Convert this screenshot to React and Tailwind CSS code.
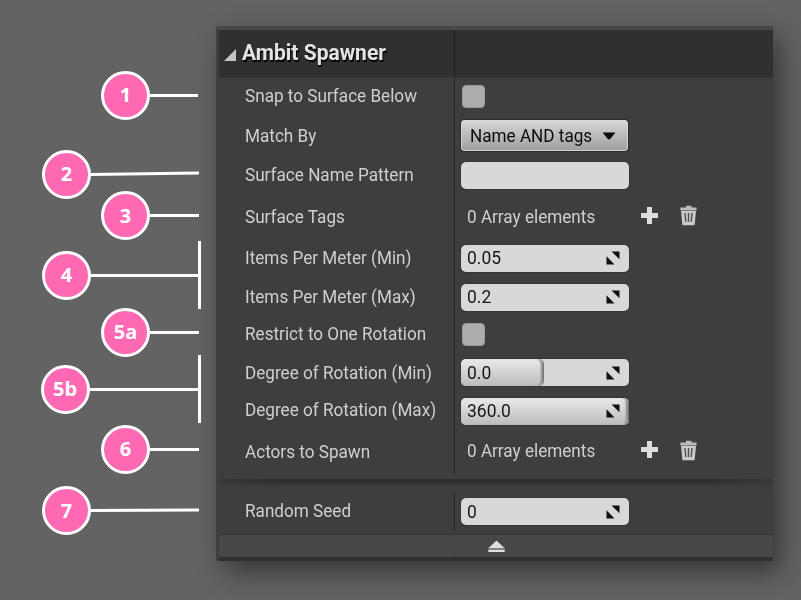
import React from 'react';

const callouts = [
  { label: '1', pos: 'left-[101px] top-[70.5px]', line: 'w-[49px]' },
  { label: '2', pos: 'left-[42px] top-[149.5px]', line: 'w-[109px] origin-left -rotate-[0.8deg]' },
  { label: '3', pos: 'left-[101px] top-[191px]', line: 'w-[50px]' },
  { label: '4', pos: 'left-[42px] top-[250.5px]', line: 'w-[108px]', bracket: true },
  { label: '5a', pos: 'left-[101px] top-[307.5px]', line: 'w-[50px]' },
  { label: '5b', pos: 'left-[40.5px] top-[364.5px]', line: 'w-[109.5px]', bracket: true },
  { label: '6', pos: 'left-[101px] top-[424.5px]', line: 'w-[50px]' },
  { label: '7', pos: 'left-[42px] top-[486px]', line: 'w-[109px] origin-left -rotate-[0.2deg]' },
];

function Callout({ label, pos, line, bracket }) {
  return (
    <div className={`absolute flex items-center ${pos}`}>
      <div className="flex size-[49px] shrink-0 items-center justify-center rounded-full border-[3px] border-white bg-[#ff69b4] font-['Open_Sans',sans-serif] text-[20px] font-bold leading-none text-white">
        {label}
      </div>
      <div className={`-ml-px h-[3px] bg-white ${line}`} />
      {bracket && <div className="-my-3 h-[68px] w-[3px] bg-white" />}
    </div>
  );
}

function Row({ label, height, labelPad = '', children }) {
  return (
    <div className={`flex ${height}`}>
      <div className={`flex w-[236px] shrink-0 items-center border-r border-[#272727] pl-[26px] ${labelPad}`}>
        <Label>{label}</Label>
      </div>
      <div className="flex flex-1 items-center pl-[5.5px]">{children}</div>
    </div>
  );
}

function Label({ children }) {
  return (
    <span className="inline-block origin-left scale-x-[0.952] whitespace-nowrap text-[18px] leading-none text-[#cfcfcf]">
      {children}
    </span>
  );
}

function Checkbox() {
  return <div className="ml-[1.5px] size-[23px] rounded-[4px] border border-[#9a9a9a] bg-[#adadad]" />;
}

function Spinner() {
  return (
    <svg className="relative mr-[9.5px] size-[14px]" viewBox="0 0 14 14">
      <path d="M5.5 0.5H13.5V8.3ZM0.5 5.3V13.5H8.5Z" fill="#111" />
    </svg>
  );
}

function Field({ value, fill, spinner = true }) {
  return (
    <div className="relative flex h-[27px] w-[168.5px] items-center justify-between overflow-hidden rounded-[5px] bg-[#d8d8d8] pl-[6px] shadow-[0_0_0_1px_#363636]">
      {fill && (
        <div
          className={`absolute inset-y-0 left-0 rounded-r-[5px] bg-linear-to-b from-[#e9e9e9] to-[#bcbcbc] shadow-[inset_-3px_0_2px_-1px_#8a8a8a,1px_0_0_#777] ${fill}`}
        />
      )}
      <span className="relative origin-left scale-x-[0.97] text-[18px] leading-none text-[#161616]">{value}</span>
      {spinner && <Spinner />}
    </div>
  );
}

function ArrayTools({ textPad }) {
  return (
    <div className="flex items-center pl-[6.5px]">
      <div className={`w-[173px] ${textPad}`}>
        <Label>0 Array elements</Label>
      </div>
      <svg className="mb-[3px] size-[19px]" viewBox="0 0 19 19">
        <path d="M7 1h5v6h6v5h-6v6H7v-6H1V7h6z" fill="#dcdcdc" />
      </svg>
      <svg className="mb-[2px] ml-[20px] h-[21px] w-[19px]" viewBox="0 0 19 21">
        <path d="M7 0.8h5.5v1.7H17.6v3H1.4v-3H7z" fill="#bcbcbc" />
        <path d="M2 6h15l-1.4 14.2H3.4z" fill="#cacaca" />
        <path d="M6 8l.8 9M9.5 8v9M13 8l-.8 9" stroke="#505050" strokeWidth="1.4" />
      </svg>
    </div>
  );
}

function Select() {
  return (
    <div className="ml-[0.5px] flex h-[31px] w-[167px] items-center rounded-[3px] border border-[#d6d6d6] bg-linear-to-b from-[#d6d6d6] to-[#a0a0a0] pl-[8px] shadow-[0_0_0_1px_#2b2b2b]">
      <span className="w-[132px] origin-left scale-x-[0.952] whitespace-nowrap text-[18px] leading-none text-[#0c0c0c]">
        Name AND tags
      </span>
      <svg className="h-[8px] w-[14px]" viewBox="0 0 14 8">
        <path d="M0.5 0.5h13L8 7.3H6z" fill="#0c0c0c" />
      </svg>
    </div>
  );
}

export default function App() {
  return (
    <div className="relative h-[600px] w-[801px] overflow-hidden bg-[#636363] pl-[216px] pt-[26px] font-[Roboto,sans-serif]">
      <div className="flex h-[535px] w-[557px] flex-col bg-[#3e3e3e] pl-[3px] shadow-[8px_11px_26px_rgba(0,0,0,0.45)]">
        <div className="-ml-[3px] h-[4px] shrink-0 bg-[#484848]" />
        <div className="flex h-[48px] shrink-0 rounded-tl-[3px] border-b border-[#383838] bg-[#303030]">
          <div className="flex w-[236px] items-center border-r border-[#202020] pb-px pl-[4.5px]">
            <svg className="mt-[4px] size-[12px]" viewBox="0 0 12 12">
              <path d="M12 0v12H0z" fill="#c4c4c4" />
            </svg>
            <h1 className="ml-[6.5px] origin-left scale-x-[0.955] whitespace-nowrap text-[22px] font-bold leading-none text-[#e4e4e4] [text-shadow:1px_2px_1px_#000]">
              Ambit Spawner
            </h1>
          </div>
        </div>
        <Row label="Snap to Surface Below" height="h-[37px]" labelPad="pb-px"><Checkbox /></Row>
        <Row label="Match By" height="h-[41px]"><Select /></Row>
        <Row label="Surface Name Pattern" height="h-[39px]" labelPad="pb-px"><Field spinner={false} /></Row>
        <Row label="Surface Tags" height="h-[43px]" labelPad="pt-px"><ArrayTools textPad="pt-[3px]" /></Row>
        <Row label="Items Per Meter (Min)" height="h-[40px]"><Field value="0.05" /></Row>
        <Row label="Items Per Meter (Max)" height="h-[38px]"><Field value="0.2" /></Row>
        <Row label="Restrict to One Rotation" height="h-[37px]" labelPad="pb-px"><Checkbox /></Row>
        <Row label="Degree of Rotation (Min)" height="h-[39px]"><Field value="0.0" fill="w-[82.5px]" /></Row>
        <Row label="Degree of Rotation (Max)" height="h-[38px]" labelPad="pb-[2px]"><Field value="360.0" fill="w-[167.5px]" /></Row>
        <Row label="Actors to Spawn" height="h-[42px]" labelPad="pt-px"><ArrayTools textPad="pt-px" /></Row>
        <div className="flex h-[7px] shrink-0">
          <div className="h-[3px] w-[236px] border-r border-[#272727]" />
        </div>
        <div className="h-[13px] shrink-0 border-t border-[#2c2c2c] bg-linear-to-b from-[#2b2b2b] to-[#3e3e3e] to-60% [mask-image:linear-gradient(to_right,rgba(0,0,0,0.4),black_12%,black_88%,rgba(0,0,0,0.3))]" />
        <Row label="Random Seed" height="h-[39px]" labelPad="pb-px"><Field value="0" /></Row>
        <div className="h-[3px] shrink-0" />
        <div className="flex h-[23px] shrink-0 items-center rounded-l-[3px] border-t border-[#363636] bg-[#474747] pl-[269px]">
          <svg className="h-[13px] w-[17px]" viewBox="0 0 17 13">
            <path d="M8.5 0.5L16.7 8.3H0.3Z" fill="#dedede" />
            <path d="M0.3 8.3h16.4v1.6H0.3z" fill="#8c8c8c" />
            <path d="M0.3 10h16.4v2H0.3z" fill="#dedede" />
          </svg>
        </div>
        <div className="flex h-[4px] shrink-0 bg-[#303030]">
          <div className="w-[236px] border-r border-[#202020]" />
        </div>
      </div>
      {callouts.map((c) => (
        <Callout key={c.label} {...c} />
      ))}
    </div>
  );
}
